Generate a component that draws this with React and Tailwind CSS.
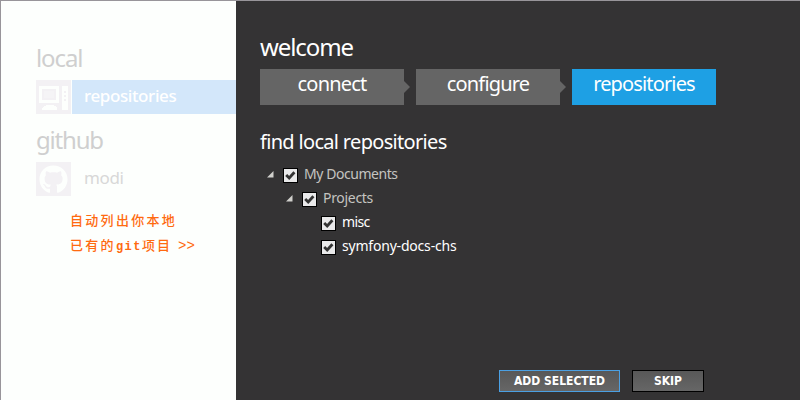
import React from "react";
import { FaGithub } from "react-icons/fa";

function ComputerIcon() {
  return (
    <svg width="35" height="34" viewBox="0 0 35 34" className="block" shapeRendering="crispEdges">
      <rect width="35" height="34" fill="#f3f1f4" />
      <path fill="#fdfffd" fillRule="evenodd" d="M3 6h20v17H3zM6 9v11h14V9z" />
      <path fill="#fdfffd" d="M8 11h10v7H8z" opacity="0.25" />
      <path fill="#fdfffd" d="M6 30v-2l2-2 3-1h5l3 1 2 2v2z" />
      <path fill="#fdfffd" fillRule="evenodd" d="M26 6h6v24h-6zM28 11v2h2v-2zM28 15v2h2v-2zM28 19v2h2v-2z" />
    </svg>
  );
}

function Step({ label, active, textClass }) {
  return (
    <div className={"relative h-9 w-36 text-center text-[20px] leading-[30px] text-white " + (active ? "bg-[#1ea0e4]" : "bg-[#656565]")}>
      <span className={textClass}>{label}</span>
      {!active && (
        <svg className="absolute top-3 left-36" width="6" height="12" viewBox="0 0 6 12">
          <path d="M0 0l6 6-6 6z" fill="#656565" />
        </svg>
      )}
    </div>
  );
}

function TreeRow({ label, indent, open, textClass }) {
  return (
    <div className={"flex h-6 items-center " + indent}>
      <div className="w-4">
        {open && (
          <svg width="7" height="7" viewBox="0 0 7 7" className="block">
            <path d="M6.5 0v6.5H0z" fill="#d0d0cc" />
          </svg>
        )}
      </div>
      <div className="mt-[2px] h-[15px] w-[15px] border border-black bg-[#e9e9ea]">
        <svg width="13" height="13" viewBox="0 0 13 13" className="block">
          <path d="M2.2 6L5.2 9l5.2-5.8" fill="none" stroke="#333" strokeWidth="2.8" />
        </svg>
      </div>
      <span className={"ml-[6px] whitespace-nowrap text-[14px] leading-6 " + textClass}>{label}</span>
    </div>
  );
}

export default function App() {
  return (
    <div className="flex h-[400px] w-[800px] overflow-hidden border-t border-l border-[#98959a] bg-[#343334] font-['Noto_Sans','Noto_Sans_CJK_SC',sans-serif]">
      <aside className="w-[235px] shrink-0 bg-[#fdfffd] pt-[41px] pl-[35px]">
        <h2 className="h-[38px] text-[24px] leading-8 text-[#cfcfcf]"><span className="tracking-[-1.1px]">local</span></h2>
        <div className="flex h-[34px]">
          <ComputerIcon />
          <div className="ml-px flex-1 bg-[#d3e7fa] pl-3 text-[17px] leading-8 font-medium text-white">
            <span className="tracking-[-0.4px]">repositories</span>
          </div>
        </div>
        <h2 className="mt-[10px] h-[38px] text-[24px] leading-8 text-[#cfcfcf]"><span className="tracking-[-1.2px]">github</span></h2>
        <div className="flex h-[34px]">
          <div className="flex w-[35px] items-center justify-center bg-[#f3f1f4]">
            <FaGithub size={29} color="#fdfffd" />
          </div>
          <div className="pl-[13px] text-[17px] leading-8 text-[#d8d8d8]"><span className="tracking-[-0.4px]">modi</span></div>
        </div>
        <p className="mt-[11px] ml-[34px] font-['Noto_Sans_CJK_SC',sans-serif] text-[13px] leading-[25px] font-medium whitespace-nowrap text-[#ff6a10]">
          <span className="block tracking-[2.3px]">自动列出你本地</span>
          <span className="block">
            <span className="tracking-[2.3px]">已有的</span>
            <span className="font-['Liberation_Mono',monospace] text-[12px] font-bold tracking-[1.5px]">git</span>
            <span className="tracking-[2px]">项目</span>
            <span className="ml-[6px] font-['Liberation_Mono',monospace] text-[14px]">&gt;&gt;</span>
          </span>
        </p>
      </aside>
      <main className="flex-1 pt-[30px] pl-6 text-white">
        <h1 className="h-[38px] text-[24px] leading-8"><span className="tracking-[-1.1px]">welcome</span></h1>
        <div className="flex gap-3">
          <Step label="connect" textClass="tracking-[-0.8px]" />
          <Step label="configure" textClass="tracking-[-0.8px]" />
          <Step label="repositories" active textClass="tracking-[-0.85px]" />
        </div>
        <h2 className="mt-[22px] text-[20px] leading-[30px]"><span className="tracking-[-0.68px]">find local repositories</span></h2>
        <div className="mt-[5px]">
          <TreeRow label="My Documents" indent="pl-[7px]" open textClass="text-[#c4c4c0] tracking-[-0.45px]" />
          <TreeRow label="Projects" indent="pl-[26px]" open textClass="text-[#c4c4c0] tracking-[-0.3px]" />
          <TreeRow label="misc" indent="pl-[45px]" textClass="text-white tracking-[-0.6px]" />
          <TreeRow label="symfony-docs-chs" indent="pl-[45px]" textClass="text-white tracking-[-0.2px]" />
        </div>
        <div className="mt-[112px] ml-[239px] flex gap-3 font-['DejaVu_Sans_Condensed',sans-serif] text-[12px] leading-5 font-bold">
          <button className="h-[22px] w-[121px] border border-[#4ba0e3] bg-linear-to-b from-[#585858] to-[#666]">ADD SELECTED</button>
          <button className="h-[22px] w-[72px] border border-black bg-linear-to-b from-[#585858] to-[#666]">SKIP</button>
        </div>
      </main>
    </div>
  );
}
